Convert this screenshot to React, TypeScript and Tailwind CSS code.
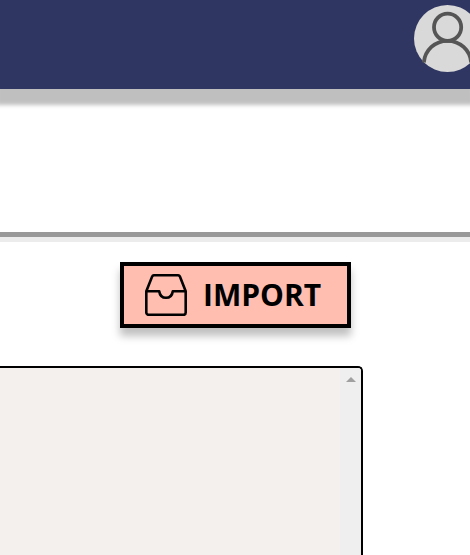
function AvatarIcon() {
  return (
    <svg viewBox="0 0 67 67" className="size-full" fill="none" aria-hidden="true">
      <circle cx="33.5" cy="33.5" r="33.5" fill="#d9d9d9" />
      <g stroke="#555" strokeWidth="3.8">
        <circle cx="33.6" cy="22.2" r="13.6" />
        <path d="M9.8 57.5C11 45 21 35.8 33.5 35.8S56 45 57.2 57.5" />
      </g>
    </svg>
  );
}

function InboxIcon() {
  return (
    <svg
      viewBox="0 0 42 42"
      className="size-[42px] shrink-0"
      fill="none"
      stroke="#000"
      strokeWidth="2.6"
      strokeLinejoin="round"
      aria-hidden="true"
    >
      <path d="M1.3 17.2V38.6a2.2 2.2 0 0 0 2.2 2.2H38.5a2.2 2.2 0 0 0 2.2-2.2V17.2L34.9 2.6A2 2 0 0 0 33 1.3H9A2 2 0 0 0 7.1 2.6Z" />
      <path d="M1.3 17.2H14.2C14.8 21.5 17.4 23.8 21 23.8S27.2 21.5 27.8 17.2H40.7" />
    </svg>
  );
}

export default function App() {
  return (
    <div className="flex h-screen flex-col overflow-hidden bg-white font-['Open_Sans',sans-serif]">
      <header className="flex h-[89px] shrink-0 justify-end bg-[#2f3661] pt-[5px] shadow-[0_12px_4px_4px_rgba(0,0,0,0.25)]">
        <button type="button" aria-label="Profile" className="-mr-[11px] size-[67px] shrink-0 rounded-full">
          <AvatarIcon />
        </button>
      </header>
      <div className="mt-[143px] h-[10px] shrink-0 border-t-[5px] border-[#999] bg-[#ececec]" />
      <main className="mr-[107px] mt-5 flex grow flex-col">
        <button
          type="button"
          className="mr-3 flex h-[66px] w-[231px] shrink-0 items-center gap-4 self-end border-4 border-black bg-[#ffbeb0] pl-[21px] text-[30px] leading-none font-bold text-black shadow-[0_8px_8px_rgba(0,0,0,0.25)]"
        >
          <InboxIcon />
          <span>IMPORT</span>
        </button>
        <div className="mt-[38px] flex grow overflow-hidden rounded-tr-[5px] border-t-2 border-r-2 border-black bg-[#f4f0ed]">
          <textarea aria-label="Imported text" className="grow resize-none overflow-hidden p-4 outline-none" />
          <div className="flex w-[21px] justify-center bg-[#efefef] pt-[9px]">
            <svg viewBox="0 0 10 5" className="h-[5px] w-[10px]" aria-hidden="true">
              <path d="M0 5L5 0L10 5Z" fill="#a0a0a0" />
            </svg>
          </div>
        </div>
      </main>
    </div>
  );
}
